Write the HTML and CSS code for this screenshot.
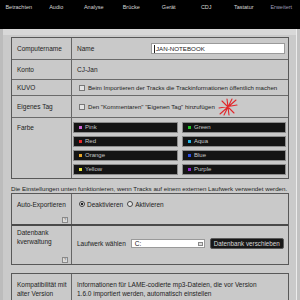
FILE: index.html
```html
<!DOCTYPE html>
<html lang="de">

<head>
    <meta charset="UTF-8">
    <meta name="viewport" content="width=device-width, initial-scale=1.0">
    <title>Einstellungen - Erweitert</title>
    <link rel="stylesheet" href="styles.css">
</head>

<body>
    <div class="tabs">
        <span class="tab">Betrachten</span>
        <span class="tab">Audio</span>
        <span class="tab">Analyse</span>
        <span class="tab">Brücke</span>
        <span class="tab">Gerät</span>
        <span class="tab">CDJ</span>
        <span class="tab">Tastatur</span>
        <span class="tab active">Erweitert</span>
    </div>

    <div class="pane">
        <div class="box">
            <div class="row r-name">
                <div class="label">Computername</div>
                <div class="value">
                    <span>Name</span>
                    <span class="field"><span class="caret"></span>JAN-NOTEBOOK</span>
                </div>
            </div>
            <div class="row r-konto">
                <div class="label">Konto</div>
                <div class="value">CJ-Jan</div>
            </div>
            <div class="row r-kuvo">
                <div class="label">KUVO</div>
                <div class="value small"><span class="check"></span>Beim Importieren der Tracks die Trackinformationen öffentlich machen</div>
            </div>
            <div class="row r-tag">
                <div class="label">Eigenes Tag</div>
                <div class="value small">
                    <span class="check"></span>Den "Kommentaren" "Eigenen Tag" hinzufügen
                    <svg class="mark" viewBox="0 0 20 18" width="20" height="18">
                        <path d="M18 2 L2 16 M1 10 L19 7 M4 3 L16 15 M9 1 L11 17 M14 1 L6 17" stroke="#e2262b" stroke-width="1.1" fill="none" stroke-linecap="round" />
                    </svg>
                </div>
            </div>
            <div class="row r-farbe">
                <div class="label top">Farbe</div>
                <div class="colors">
                    <div class="swatch pink"><i></i>Pink</div>
                    <div class="swatch red"><i></i>Red</div>
                    <div class="swatch orange"><i></i>Orange</div>
                    <div class="swatch yellow"><i></i>Yellow</div>
                    <div class="swatch green"><i></i>Green</div>
                    <div class="swatch aqua"><i></i>Aqua</div>
                    <div class="swatch blue"><i></i>Blue</div>
                    <div class="swatch purple"><i></i>Purple</div>
                </div>
            </div>
        </div>

        <p class="note">Die Einstellungen unten funktionieren, wenn Tracks auf einem externen Laufwerk verwendet werden.</p>

        <div class="box">
            <div class="row r-auto">
                <div class="label tall">
                    Auto-Exportieren
                    <span class="help">?</span>
                </div>
                <div class="value top">
                    <span class="radio on"></span>Deaktivieren
                    <span class="radio second"></span>Aktivieren
                </div>
            </div>
            <div class="row r-db">
                <div class="label tall">
                    <span>Datenbank<br>kverwaltung</span>
                    <span class="help">?</span>
                </div>
                <div class="value drive">
                    <span>Laufwerk wählen</span>
                    <span class="select">C:<span class="select-icon"></span></span>
                    <span class="btn">Datenbank verschieben</span>
                </div>
            </div>
        </div>

        <div class="box third">
            <div class="row r-compat">
                <div class="label tall">Kompatibilität mit<br>alter Version</div>
                <div class="value top">Informationen für LAME-codierte mp3-Dateien, die vor Version<br>1.6.0 importiert werden, automatisch einstellen</div>
            </div>
        </div>
    </div>
</body>

</html>
```

FILE: styles.css
```css
* {
    box-sizing: border-box;
}

body {
    margin: 0;
    width: 300px;
    height: 300px;
    overflow: hidden;
    background: #c2c2c2;
    font-family: "Liberation Sans", Arial, sans-serif;
    color: #222;
}

.tabs {
    display: flex;
    height: 29px;
    background: #000;
}

.tab {
    flex: 1;
    text-align: center;
    color: #d6d6d6;
    font-size: 5.5px;
    line-height: 7px;
    padding-top: 4px;
}

.tab.active {
    color: #9c9cb8;
}

.pane {
    width: 297px;
    height: 271px;
    background: linear-gradient(#d8d8d8 0 6px, #cacaca 6px);
    border-left: 3px solid #bcbcbc;
    border-right: 1px solid #ececec;
    padding: 8px 7px 0 8px;
}

.box {
    border: 1px solid #585858;
    background: #c9c9c9;
}

.box.third {
    margin-top: 8px;
}

.row {
    display: grid;
    grid-template-columns: 60px 1fr;
    border-top: 1px solid #6a6a6a;
    font-size: 6.5px;
    line-height: 9px;
}

.row:first-child {
    border-top: none;
}

.label {
    display: flex;
    align-items: center;
    padding: 0 3px 0 5px;
    border-right: 1px solid #666;
}

.label.top {
    align-items: flex-start;
    padding-top: 5px;
}

.label.tall {
    flex-direction: column;
    align-items: flex-start;
}

.value {
    display: flex;
    align-items: center;
    padding: 0 3px 0 5px;
    white-space: nowrap;
}

.value.small {
    font-size: 6.1px;
}

.value.top {
    align-items: flex-start;
}

.r-name { height: 21px; }
.r-konto { height: 20px; }
.r-kuvo { height: 16px; }
.r-tag { height: 22px; }
.r-farbe { height: 61px; }

.field {
    display: flex;
    align-items: center;
    margin-left: auto;
    width: 134px;
    height: 11px;
    background: #fff;
    border: 1px solid #9a9a9a;
    padding-left: 2px;
    font-size: 6.2px;
}

.caret {
    width: 1px;
    height: 8px;
    background: #222;
    margin-right: 1px;
}

.check {
    width: 6px;
    height: 6px;
    border: 1px solid #777;
    background: #e4e4e4;
    margin: 0 3px 0 2px;
}

.mark {
    margin-left: 3px;
    margin-top: 1px;
}

.colors {
    display: grid;
    grid-template-columns: 105px 104px;
    grid-template-rows: repeat(4, 11px);
    grid-auto-flow: column;
    column-gap: 4px;
    row-gap: 3px;
    padding: 4px 0 0 1px;
}

.swatch {
    display: flex;
    align-items: center;
    gap: 3px;
    padding-left: 5px;
    background: #141414;
    border: 1px solid #8c8c8c;
    color: #c8c8c8;
    font-size: 6px;
}

.swatch i {
    width: 3px;
    height: 3px;
}

.pink i { background: #d266d6; }
.red i { background: #e8262a; }
.orange i { background: #e8a628; }
.yellow i { background: #e6e43a; }
.green i { background: #22c62a; }
.aqua i { background: #24b6e6; }
.blue i { background: #2a4ee6; }
.purple i { background: #9028cc; }

.note {
    margin: 0;
    height: 14px;
    padding-top: 5px;
    font-size: 6.2px;
    line-height: 9px;
    white-space: nowrap;
}

.r-auto {
    height: 30px;
}

.r-auto .label,
.r-auto .value {
    padding-top: 6px;
}

.r-db {
    height: 40px;
    border-top: 2px solid #4a4a4a;
}

.r-db .label {
    padding-top: 2px;
}

.help {
    align-self: flex-end;
    margin-top: auto;
    margin-bottom: 1px;
    width: 6px;
    height: 6px;
    border: 1px solid #8a8a8a;
    background: #dcdcdc;
    color: #555;
    font-size: 4px;
    line-height: 4px;
    text-align: center;
}

.radio {
    width: 6px;
    height: 6px;
    border: 1px solid #444;
    border-radius: 50%;
    background: #e8e8e8;
    margin: 1px 2px 0 2px;
}

.radio.on {
    background: radial-gradient(#222 0 1.4px, #e8e8e8 1.6px);
}

.radio.second {
    margin-left: 4px;
}

.drive {
    align-items: flex-start;
    padding-top: 12px;
}

.drive > span {
    height: 11px;
    display: flex;
    align-items: center;
}

.select {
    width: 74px;
    margin-left: 5px;
    height: 9px !important;
    margin-top: 1px;
    background: #fff;
    border: 1px solid #9a9a9a;
    padding-left: 3px;
}

.select-icon {
    margin-left: auto;
    margin-right: 1px;
    width: 5px;
    height: 4px;
    border: 1px solid #888;
    background: #ddd;
}

.btn {
    width: 74px;
    margin-left: 5px;
    justify-content: center;
    background: #181818;
    border: 1px solid #5a5a5a;
    border-radius: 2px;
    color: #d8d8d8;
    font-size: 6.3px;
}

.r-compat {
    height: 40px;
}

.r-compat .label,
.r-compat .value {
    padding-top: 6px;
}
```
